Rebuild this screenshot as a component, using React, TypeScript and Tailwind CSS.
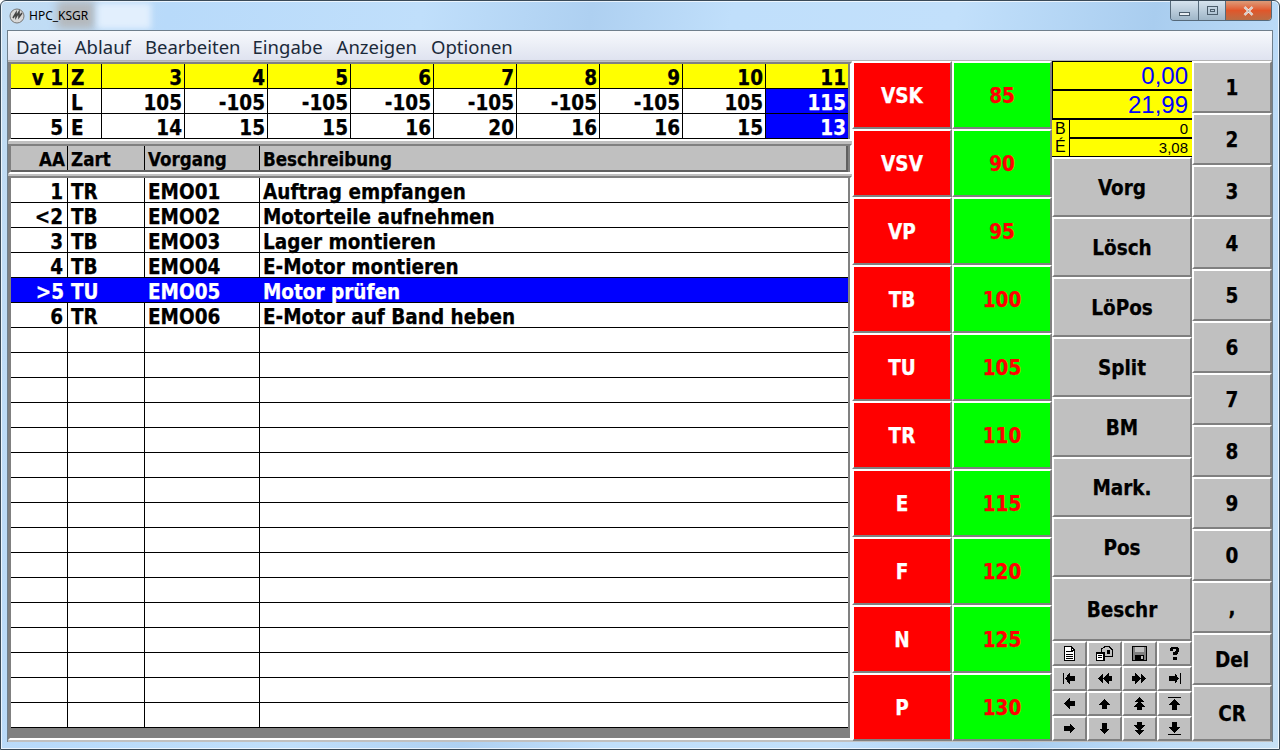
import React from "react";

const TAH = "font-['DejaVu_Sans_Condensed','DejaVu_Sans',sans-serif] font-stretch-condensed [-webkit-text-stroke:0.25px_currentColor]";
const SZ = "text-[20.5px]";
const raised = "border-2 border-t-white border-l-white border-r-[#808080] border-b-[#808080]";
const sunken = "border-2 border-t-[#808080] border-l-[#808080] border-r-white border-b-white";

const cols = [57, 34, 83, 83, 83, 83, 83, 83, 83, 83, 82];
const topRows: { cells: string[]; bg: string }[] = [
  { cells: ["v 1", "Z", "3", "4", "5", "6", "7", "8", "9", "10", "11"], bg: "bg-[#ffff00]" },
  { cells: ["", "L", "105", "-105", "-105", "-105", "-105", "-105", "-105", "105", "115"], bg: "bg-white" },
  { cells: ["5", "E", "14", "15", "15", "16", "20", "16", "16", "15", "13"], bg: "bg-white" },
];

const listRows = [
  ["1", "TR", "EMO01", "Auftrag empfangen"],
  ["<2", "TB", "EMO02", "Motorteile aufnehmen"],
  ["3", "TB", "EMO03", "Lager montieren"],
  ["4", "TB", "EMO04", "E-Motor montieren"],
  [">5", "TU", "EMO05", "Motor prüfen"],
  ["6", "TR", "EMO06", "E-Motor auf Band heben"],
  ...Array.from({ length: 16 }, () => ["", "", "", ""]),
];

const pairs = [
  ["VSK", "85"], ["VSV", "90"], ["VP", "95"], ["TB", "100"], ["TU", "105"],
  ["TR", "110"], ["E", "115"], ["F", "120"], ["N", "125"], ["P", "130"],
];

const actions = ["Vorg", "Lösch", "LöPos", "Split", "BM", "Mark.", "Pos"];
const numbers = ["1", "2", "3", "4", "5", "6", "7", "8", "9", "0", ","];

const Ico = ({ children }: { children: React.ReactNode }) => (
  <svg width="17" height="17" viewBox="0 0 16 16" fill="#000" shapeRendering="crispEdges">{children}</svg>
);

const icons: React.ReactNode[] = [
  <Ico><path d="M3.5 1.5h6l3 3v10h-9z" fill="#fff" stroke="#000" /><path d="M5 6h6v1H5zM5 8h6v1H5zM5 10h6v1H5zM5 12h6v1H5zM9 2h1v3h3v1H9z" /></Ico>,
  <Ico><path d="M.5 7.5h7v7h-7z" fill="#fff" stroke="#000" /><path d="M5.5 3.5l3-2h4l3 3v6h-8v-3h-2z" fill="#c0c0c0" stroke="#000" /><path d="M2 9h4v1H2zM2 11h4v1H2zM10 5h3v3h-3z" /></Ico>,
  <Ico><path d="M1.5 1.5h13v13h-13z" fill="#808080" stroke="#000" /><path d="M4 2h8v5H4z" fill="#c0c0c0" /><path d="M4 9h8v5H4z" /><path d="M9 10h2v3H9z" fill="#c0c0c0" /></Ico>,
  <Ico><path d="M5 2h6v1h1v4h-1v1h-1v1H7V7h1V6h1V4H7v2H4V3h1z M7 11h3v3H7z" /></Ico>,
  <Ico><path d="M2 3h1v10H2z M8 3v10L3.5 8z M8 5.5h5v5H8z" /></Ico>,
  <Ico><path d="M7 3v10L1.5 8z M12 3v10L6.5 8z M12 5.5h3v5h-3z" /></Ico>,
  <Ico><path d="M9 3v10l5.5-5z M4 3v10l5.5-5z M1 5.5h3v5H1z" /></Ico>,
  <Ico><path d="M13 3h1v10h-1z M8 3v10l4.5-5z M3 5.5h5v5H3z" /></Ico>,
  <Ico><path d="M8 3v10L2.5 8z M8 5.5h5v5H8z" /></Ico>,
  <Ico><path d="M2.5 9h11L8 3.5z M5.5 9h5v4h-5z" /></Ico>,
  <Ico><path d="M2.5 7h11L8 1.5z M2.5 11h11L8 5.5z M5.5 11h5v3h-5z" /></Ico>,
  <Ico><path d="M2 2h12v1H2z M2.5 9h11L8 4z M5.5 9h5v5h-5z" /></Ico>,
  <Ico><path d="M8 3v10l5.5-5z M3 5.5h5v5H3z" /></Ico>,
  <Ico><path d="M2.5 8h11L8 13.5z M5.5 3h5v5h-5z" /></Ico>,
  <Ico><path d="M5.5 2h5v3h-5z M2.5 5h11L8 10.5z M2.5 9h11L8 14.5z" /></Ico>,
  <Ico><path d="M5.5 2h5v5h-5z M2.5 7h11L8 12z M2 13h12v1H2z" /></Ico>,
];

export default function App() {
  return (
    <div className="w-[1280px] h-[750px] overflow-hidden relative flex flex-col bg-[linear-gradient(100deg,#c3ddf3_0%,#b8dafa_12%,#c0dffb_30%,#aed0f1_42%,#c0dffb_52%,#c2e0fb_68%,#a9cdef_82%,#bddcf8_92%,#c6e0f5_100%)] border border-[#3a4a58] rounded-t-md shadow-[inset_0_0_0_1px_rgba(255,255,255,0.7)]">
      <div className="absolute left-[56px] top-0 w-[38px] h-[28px] bg-[#b4b8bc] blur-[4px]" />
      <div className="absolute left-[96px] top-[2px] w-[54px] h-[26px] bg-[#e2effd] blur-[3px]" />
      {/* title bar */}
      <div className="relative h-[29px] shrink-0 flex items-start pl-[7px] pt-[6px] font-['Noto_Sans',sans-serif] text-[12px] text-black">
        <svg width="18" height="18" viewBox="0 0 18 18" className="mr-[3px]">
          <circle cx="9" cy="9" r="7" fill="#d8d8d8" stroke="#777" />
          <path d="M5 11l3-5v4l3-5v5l3-4" fill="none" stroke="#444" strokeWidth="1.6" />
        </svg>
        <span className="leading-[18px]">HPC_KSGR</span>
        <div className="absolute top-0 right-[7px] flex h-[20px] w-[102px] border border-t-0 border-[#55697a] rounded-b-[4px] overflow-hidden">
          <div className="w-[28px] border-r border-[#55697a] bg-gradient-to-b from-[#d6e3ee] to-[#9fb6c8] flex items-center justify-center">
            <div className="w-[11px] h-[4px] mt-[6px] bg-[#e8eef3] border border-[#4b5d6c]" />
          </div>
          <div className="w-[27px] border-r border-[#55697a] bg-gradient-to-b from-[#d6e3ee] to-[#9fb6c8] flex items-center justify-center">
            <div className="w-[11px] h-[9px] border border-[#4b5d6c] flex items-center justify-center"><div className="w-[5px] h-[3px] border border-[#4b5d6c]" /></div>
          </div>
          <div className="flex-1 bg-gradient-to-b from-[#dc9a78] via-[#e0562a] to-[#b96c44] flex items-center justify-center">
            <svg width="11" height="10" viewBox="0 0 11 10"><path d="M1.5 1l8 8M9.5 1l-8 8" stroke="#fff" strokeWidth="2.4" /><path d="M1.5 1l8 8M9.5 1l-8 8" stroke="#5b4036" strokeWidth="0.5" /></svg>
          </div>
        </div>
      </div>

      {/* client area */}
      <div className="relative mx-[6px] h-[712px] shrink-0 flex flex-col bg-[#c0c0c0] border border-[#6f7f8c] border-b-0">
        {/* menu */}
        <div className="h-[30px] shrink-0 flex items-center gap-[14px] pl-[8px] pt-[2px] bg-gradient-to-b from-[#f7f9fc] to-[#dfe3f0] border-b border-[#b3b3b3] font-['Noto_Sans',sans-serif] text-[18.5px] text-[#1b2a3a]">
          <span>Datei</span>
          <span className="-ml-[1px]">Ablauf</span>
          <span>Bearbeiten</span>
          <span className="-ml-[2px]">Eingabe</span>
          <span>Anzeigen</span>
          <span>Optionen</span>
        </div>

        <div className="flex-1 flex min-h-0">
          {/* left */}
          <div className="w-[844px] shrink-0 flex flex-col">
            <div className={`mt-[1px] h-[79px] ${sunken} bg-[#808080] pl-[1px]`}>
              {topRows.map((r, ri) => (
                <div key={ri} className="flex h-[25px] border-b border-black w-[837px]">
                  {r.cells.map((c, i) => {
                    const sel = i === 10 && ri > 0;
                    return (
                      <div
                        key={i}
                        style={{ width: cols[i] }}
                        className={`${sel ? "bg-[#0000ff] text-white" : `${r.bg} text-black`} ${i === 10 ? "" : "border-r border-black"} shrink-0 h-full flex items-center pt-[4px] ${i === 1 ? "justify-start pl-[3px]" : i === 0 ? "justify-end pr-[4px]" : "justify-end pr-[2px]"} ${TAH} font-bold ${SZ} leading-none whitespace-pre`}
                      >
                        {c}
                      </div>
                    );
                  })}
                </div>
              ))}
            </div>

            <div className={`mt-[3px] h-[30px] ${sunken} bg-[#808080] pl-[1px]`}>
              <div className="h-[26px] w-[837px] flex bg-[#c0c0c0] border-b-2 border-[#606060] border-r-2 overflow-hidden">
                {["AA", "Zart", "Vorgang", "Beschreibung"].map((h, i) => (
                  <div
                    key={h}
                    style={{ width: [57, 77, 115, 586][i] }}
                    className={`${i < 3 ? "border-r border-black" : ""} h-full shrink-0 flex items-center pt-[4px] ${i === 0 ? "justify-end pr-[2px]" : "pl-[3px]"} ${TAH} font-bold text-[18.6px] leading-none text-black`}
                  >
                    {h}
                  </div>
                ))}
              </div>
            </div>

            <div className={`mt-[2px] mb-[2px] flex-1 min-h-0 ${sunken} bg-[#808080] pl-[1px] overflow-hidden`}>
              {listRows.map((r, ri) => {
                const sel = ri === 4;
                return (
                  <div key={ri} className={`flex h-[25px] w-[837px] border-b border-black ${sel ? "bg-[#0000ff] text-white" : "bg-white text-black"}`}>
                    {r.map((c, i) => (
                      <div
                        key={i}
                        style={{ width: [57, 77, 115, 588][i] }}
                        className={`${i < 3 && !sel ? "border-r border-black" : ""} h-full shrink-0 flex items-center pt-[4px] ${i === 0 ? "justify-end pr-[4px]" : "pl-[3px]"} ${TAH} font-bold ${SZ} leading-none whitespace-pre`}
                      >
                        {c}
                      </div>
                    ))}
                  </div>
                );
              })}
            </div>
          </div>

          {/* red and green */}
          <div className="w-[200px] shrink-0 flex flex-col">
            {pairs.map(([a, b]) => (
              <div key={a} className="flex h-[68px] shrink-0">
                <div className={`w-[100px] ${raised} bg-[#ff0000] text-white flex items-center justify-center pt-[3px] ${TAH} font-bold ${SZ} leading-none`}>{a}</div>
                <div className={`w-[100px] ${raised} bg-[#00ff00] text-[#ff0000] flex items-center justify-center pt-[3px] ${TAH} font-bold ${SZ} leading-none`}>{b}</div>
              </div>
            ))}
          </div>

          {/* actions */}
          <div className="w-[140px] shrink-0 flex flex-col">
            <div className="bg-[#ffff00] border-l border-black font-['Liberation_Sans',sans-serif] text-[#0000ff] text-[24px] leading-none">
              <div className="h-[30px] border-t border-b-2 border-black flex items-center justify-end pt-[1px] pr-[4px]">0,00</div>
              <div className="h-[29px] border-b-2 border-black flex items-center justify-end pr-[4px]">21,99</div>
            </div>
            <div className="h-[37px] shrink-0 flex bg-[#ffff00] border-b border-black font-['Liberation_Sans',sans-serif] text-black">
              <div className="w-[17px] flex flex-col text-[16px] leading-[18px] pl-[3px]"><span>B</span><span>É</span></div>
              <div className="flex-1 border-l border-black text-[15px] leading-none">
                <div className="h-[19px] border-b-2 border-black flex items-center justify-end pr-[4px]">0</div>
                <div className="h-[17px] flex items-center justify-end pr-[4px]">3,08</div>
              </div>
            </div>
            {actions.map((a) => (
              <div key={a} className={`h-[60px] shrink-0 ${raised} bg-[#c0c0c0] flex items-center justify-center pt-[2px] ${TAH} font-bold ${SZ} leading-none text-black`}>{a}</div>
            ))}
            <div className={`h-[64px] shrink-0 ${raised} bg-[#c0c0c0] flex items-center justify-center pt-[2px] ${TAH} font-bold ${SZ} leading-none text-black`}>Beschr</div>
            <div className="grid grid-cols-[35px_35px_35px_35px] grid-rows-[25px_25px_25px_25px]">
              {icons.map((ic, i) => (
                <div key={i} className={`${raised} bg-[#c0c0c0] flex items-center justify-center`}>{ic}</div>
              ))}
            </div>
          </div>

          {/* keypad */}
          <div className="w-[80px] shrink-0 flex flex-col">
            {numbers.map((n) => (
              <div key={n} className={`h-[52px] shrink-0 ${raised} bg-[#c0c0c0] flex items-center justify-center pt-[2px] ${TAH} font-bold ${SZ} leading-none text-black`}>{n}</div>
            ))}
            <div className={`h-[52px] shrink-0 ${raised} bg-[#c0c0c0] flex items-center justify-center pt-[2px] ${TAH} font-bold ${SZ} leading-none text-black`}>Del</div>
            <div className={`h-[56px] shrink-0 ${raised} bg-[#c0c0c0] flex items-center justify-center pt-[2px] ${TAH} font-bold ${SZ} leading-none text-black`}>CR</div>
          </div>
        </div>
      </div>
    </div>
  );
}
